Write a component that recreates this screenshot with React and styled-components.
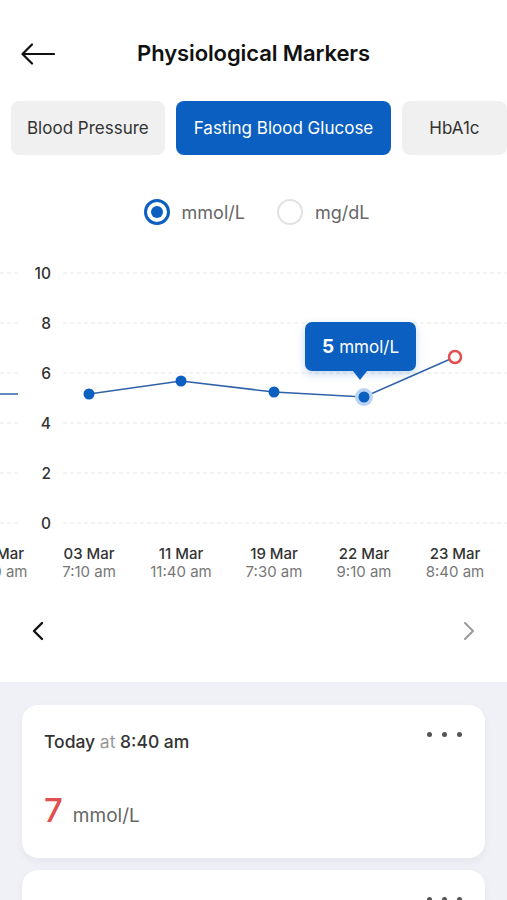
import React from 'react';
import styled, {createGlobalStyle} from 'styled-components';

const BLUE = '#0b5fc1';

const GlobalStyle = createGlobalStyle`
  html, body {
    margin: 0;
    padding: 0;
    background: #ffffff;
  }
  body {
    font-family: Inter, "Noto Sans", "Liberation Sans", sans-serif;
    color: #222;
  }
  * {
    box-sizing: border-box;
  }
`;

const Page = styled.div`
  width: 507px;
  height: 900px;
  overflow: hidden;
  display: flex;
  flex-direction: column;
  background: #eff1f6;
`;

const TopSection = styled.section`
  background: #ffffff;
  padding-bottom: 11px;
`;

const Header = styled.header`
  position: relative;
  height: 101px;
  padding-top: 5px;
  display: flex;
  align-items: center;
  justify-content: center;
`;

const BackButton = styled.button`
  position: absolute;
  left: 20px;
  top: 42px;
  width: 36px;
  height: 24px;
  padding: 0;
  border: none;
  background: none;
  display: flex;
  align-items: center;
  justify-content: center;
`;

const Title = styled.h1`
  margin: 0;
  font-size: 22px;
  font-weight: 600;
  color: #111;
  letter-spacing: -0.1px;
`;

const Tabs = styled.nav`
  display: flex;
  gap: 11px;
  padding-left: 11px;
  height: 54px;
  overflow: hidden;
`;

const Tab = styled.button`
  flex: none;
  height: 54px;
  padding: 0 ${(p) => p.$pad}px;
  border: none;
  border-radius: 8px;
  font-family: inherit;
  font-size: 17px;
  font-weight: 400;
  background: ${(p) => (p.$active ? BLUE : '#f0f0f0')};
  color: ${(p) => (p.$active ? '#ffffff' : '#333')};
`;

const Units = styled.div`
  margin-top: 38px;
  height: 38px;
  display: flex;
  align-items: center;
  justify-content: center;
  gap: 32px;
  padding-left: 6px;
`;

const UnitOption = styled.label`
  display: flex;
  align-items: center;
  gap: 12px;
  font-size: 18px;
  color: #666;
`;

const Radio = styled.span`
  width: 26px;
  height: 26px;
  border-radius: 50%;
  border: ${(p) => (p.$checked ? `3px solid ${BLUE}` : '2px solid #e2e2e2')};
  display: flex;
  align-items: center;
  justify-content: center;
  &::after {
    content: '';
    display: ${(p) => (p.$checked ? 'block' : 'none')};
    width: 12px;
    height: 12px;
    border-radius: 50%;
    background: ${BLUE};
  }
`;

const ChartWrap = styled.div`
  position: relative;
  height: 360px;
`;

const ChartSvg = styled.svg`
  display: block;
  font-family: Inter, "Noto Sans", "Liberation Sans", sans-serif;
`;

const Tooltip = styled.div`
  position: absolute;
  left: 305px;
  top: 91px;
  width: 111px;
  height: 49px;
  border-radius: 7px;
  background: ${BLUE};
  color: #fff;
  display: flex;
  align-items: center;
  justify-content: center;
  gap: 5px;
  font-size: 17px;
  box-shadow: 0 3px 8px rgba(11, 95, 193, 0.25);
  & b {
    font-size: 19px;
    font-weight: 700;
  }
  &::after {
    content: '';
    position: absolute;
    left: 48px;
    bottom: -9px;
    border-left: 7px solid transparent;
    border-right: 7px solid transparent;
    border-top: 9px solid ${BLUE};
  }
`;

const Pager = styled.div`
  height: 80px;
  display: flex;
  align-items: center;
  justify-content: space-between;
  padding: 0 31px 0 31px;
`;

const PagerButton = styled.button`
  padding: 0;
  border: none;
  background: none;
  display: flex;
`;

const List = styled.section`
  flex: 1;
  display: flex;
  flex-direction: column;
  gap: 12px;
  padding: 23px 22px 0;
`;

const Card = styled.article`
  flex: none;
  height: 153px;
  background: #fff;
  border-radius: 16px;
  padding: 22px 22px 0;
  box-shadow: 0 4px 10px rgba(30, 40, 70, 0.05);
`;

const CardHead = styled.div`
  display: flex;
  justify-content: space-between;
  align-items: flex-start;
`;

const When = styled.div`
  font-size: 17.5px;
  line-height: 30px;
  font-weight: 500;
  color: #333;
  & span {
    color: #999;
    font-weight: 400;
  }
`;

const Dots = styled.div`
  display: flex;
  gap: 10px;
  margin-top: 5px;
  margin-right: 1px;
  & i {
    width: 5px;
    height: 5px;
    border-radius: 50%;
    background: #555;
  }
`;

const Reading = styled.div`
  margin-top: 35px;
  display: flex;
  align-items: baseline;
  gap: 10px;
  line-height: 36px;
`;

const Value = styled.span`
  font-size: 33px;
  font-weight: 500;
  color: ${(p) => (p.$high ? '#e05050' : '#333')};
`;

const Unit = styled.span`
  font-size: 19px;
  color: #666;
`;

const gridY = [
  {label: '10', y: 42},
  {label: '8', y: 92},
  {label: '6', y: 142},
  {label: '4', y: 192},
  {label: '2', y: 242},
  {label: '0', y: 292},
];

const points = [
  {x: 89, y: 163, date: '03 Mar', time: '7:10 am'},
  {x: 181, y: 150, date: '11 Mar', time: '11:40 am'},
  {x: 274, y: 161, date: '19 Mar', time: '7:30 am'},
  {x: 364, y: 166, date: '22 Mar', time: '9:10 am', selected: true},
  {x: 455, y: 126, date: '23 Mar', time: '8:40 am', high: true},
];

const Chart = () => (
  <ChartWrap>
    <ChartSvg width="507" height="360" viewBox="0 0 507 360">
      {gridY.map((g) => (
        <g key={g.label}>
          <line x1="0" x2="20" y1={g.y} y2={g.y} stroke="#e8e8e8" strokeDasharray="4 3" />
          <line x1="63" x2="507" y1={g.y} y2={g.y} stroke="#e8e8e8" strokeDasharray="4 3" />
          <text x="51" y={g.y} textAnchor="end" dominantBaseline="central" fontSize="15.5" fontWeight="500" fill="#333">
            {g.label}
          </text>
        </g>
      ))}
      <line x1="0" x2="18" y1="163" y2="163" stroke="#2f62a8" strokeWidth="1.5" />
      <polyline
        points={points.map((p) => `${p.x},${p.y}`).join(' ')}
        fill="none"
        stroke="#2f62a8"
        strokeWidth="1.5"
      />
      {points.map((p) =>
        p.high ? (
          <circle key={p.date} cx={p.x} cy={p.y} r="6" fill="#fff" stroke="#e05050" strokeWidth="2.5" />
        ) : (
          <g key={p.date}>
            {p.selected && <circle cx={p.x} cy={p.y} r="9" fill="#b9d3f2" />}
            <circle cx={p.x} cy={p.y} r="5.5" fill={BLUE} />
          </g>
        ),
      )}
      <text x="0" y="322" textAnchor="middle" dominantBaseline="central" fontSize="15" fontWeight="500" fill="#333">
        01 Mar
      </text>
      <text x="0" y="340" textAnchor="middle" dominantBaseline="central" fontSize="15" fill="#777">
        8:10 am
      </text>
      {points.map((p) => (
        <g key={p.time}>
          <text x={p.x} y="322" textAnchor="middle" dominantBaseline="central" fontSize="15" fontWeight="500" fill="#333">
            {p.date}
          </text>
          <text x={p.x} y="340" textAnchor="middle" dominantBaseline="central" fontSize="15" fill="#777">
            {p.time}
          </text>
        </g>
      ))}
    </ChartSvg>
    <Tooltip>
      <b>5</b>
      mmol/L
    </Tooltip>
  </ChartWrap>
);

const App = () => {
  return (
    <Page>
      <GlobalStyle />
      <TopSection>
        <Header>
          <BackButton>
            <svg width="34" height="22" viewBox="0 0 34 22" fill="none" stroke="#111" strokeWidth="2.2" strokeLinecap="round" strokeLinejoin="round">
              <path d="M33 11H2" />
              <path d="M11 1.5L1.5 11L11 20.5" />
            </svg>
          </BackButton>
          <Title>Physiological Markers</Title>
        </Header>
        <Tabs>
          <Tab $pad={16}>Blood Pressure</Tab>
          <Tab $pad={18} $active>
            Fasting Blood Glucose
          </Tab>
          <Tab $pad={27}>HbA1c</Tab>
        </Tabs>
        <Units>
          <UnitOption>
            <Radio $checked />
            mmol/L
          </UnitOption>
          <UnitOption>
            <Radio />
            mg/dL
          </UnitOption>
        </Units>
        <Chart />
        <Pager>
          <PagerButton>
            <svg width="14" height="20" viewBox="0 0 14 20" fill="none" stroke="#111" strokeWidth="2.4" strokeLinecap="round" strokeLinejoin="round">
              <path d="M11 2L3 10L11 18" />
            </svg>
          </PagerButton>
          <PagerButton>
            <svg width="14" height="20" viewBox="0 0 14 20" fill="none" stroke="#9a9a9a" strokeWidth="2" strokeLinecap="round" strokeLinejoin="round">
              <path d="M3 2L11 10L3 18" />
            </svg>
          </PagerButton>
        </Pager>
      </TopSection>
      <List>
        <Card>
          <CardHead>
            <When>
              Today <span>at</span> 8:40 am
            </When>
            <Dots>
              <i />
              <i />
              <i />
            </Dots>
          </CardHead>
          <Reading>
            <Value $high>7</Value>
            <Unit>mmol/L</Unit>
          </Reading>
        </Card>
        <Card>
          <CardHead>
            <When />
            <Dots>
              <i />
              <i />
              <i />
            </Dots>
          </CardHead>
        </Card>
      </List>
    </Page>
  );
};

export default App;
